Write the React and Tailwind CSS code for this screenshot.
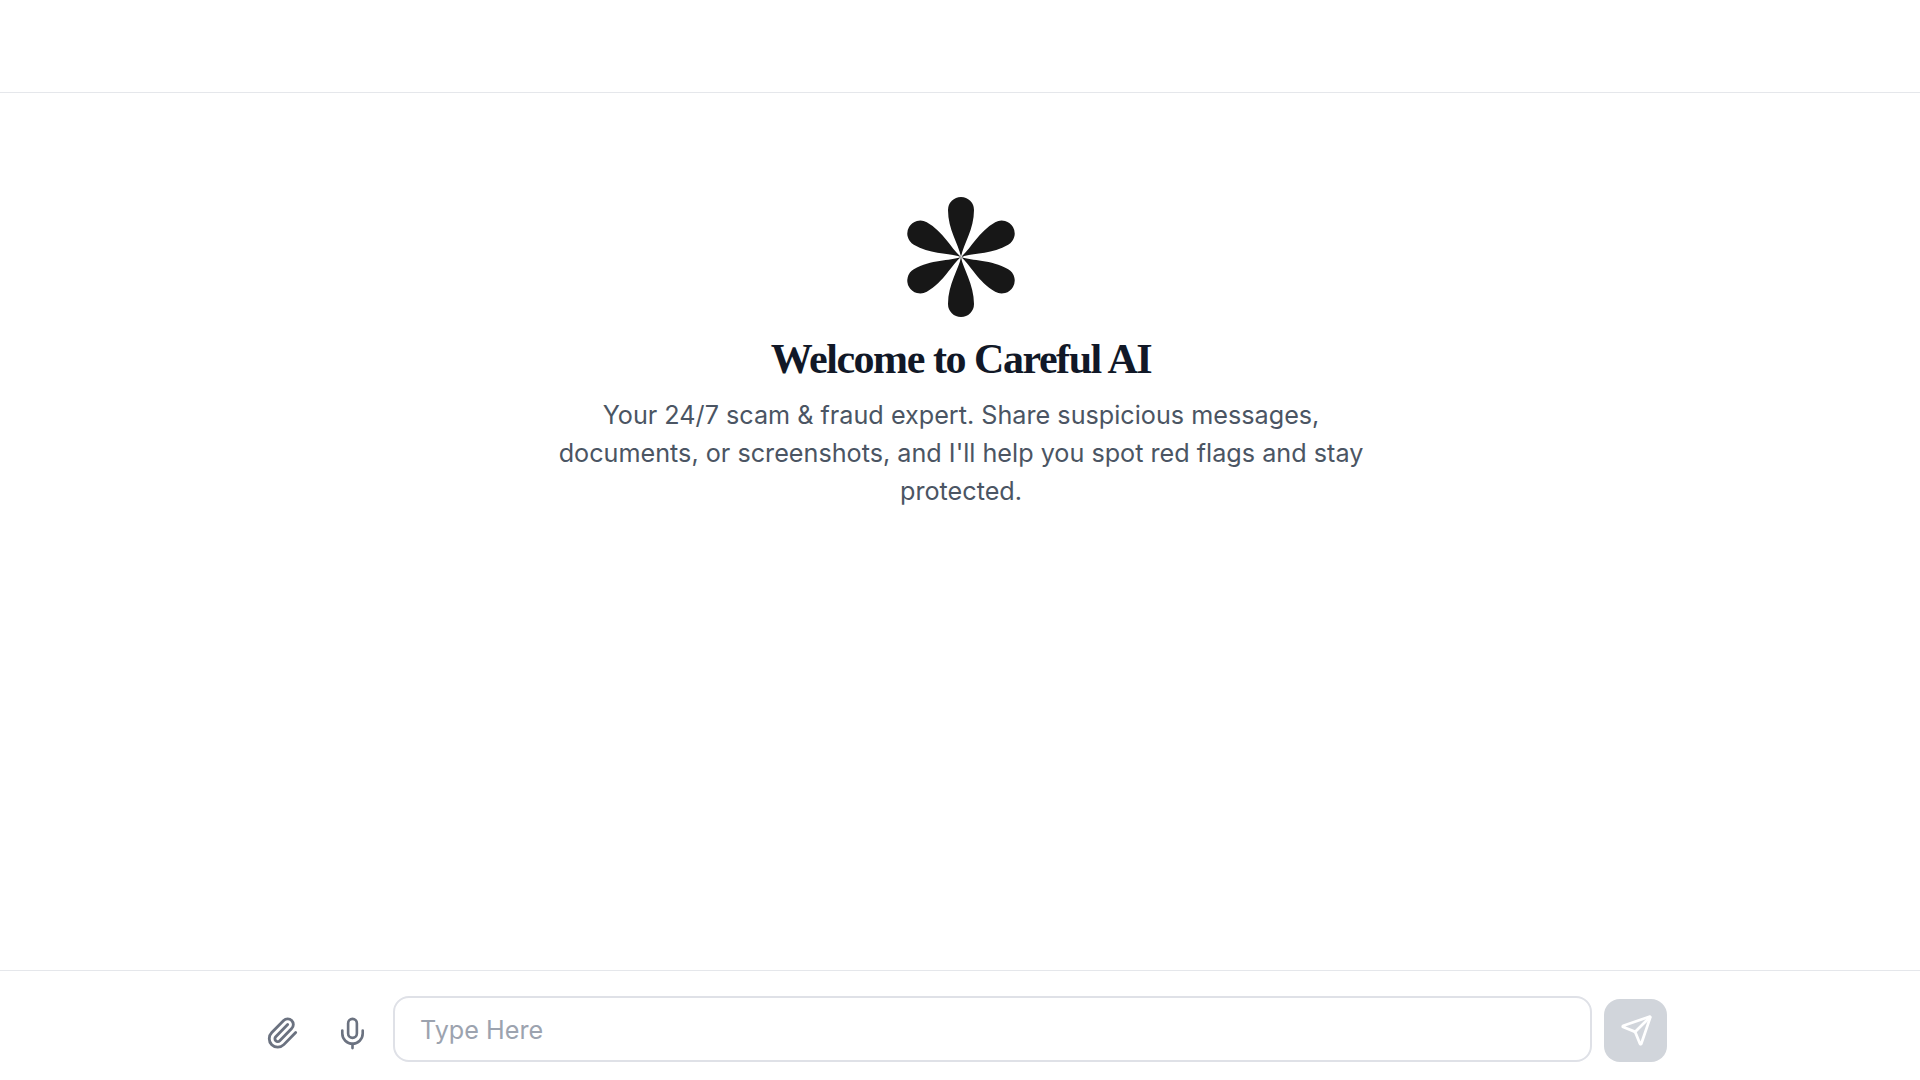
import React from 'react';
import { Send, Mic, Paperclip } from 'lucide-react';

function Logo() {
  const petal = 'M0 0 C-2 -12 -13 -27 -13 -47 A13 13 0 0 1 13 -47 C13 -27 2 -12 0 0 Z';
  return (
    <svg width="120" height="124" viewBox="-60 -62 120 124" className="block">
      {[0, 60, 120, 180, 240, 300].map((deg) => (
        <path key={deg} d={petal} fill="#171717" transform={`rotate(${deg})`} />
      ))}
    </svg>
  );
}

export default function App() {
  return (
    <div className="h-screen bg-white flex flex-col font-['Inter',sans-serif]">
      <header className="h-[93px] shrink-0 border-b border-[#e5e7eb]" />

      <main className="flex-1 flex flex-col items-center pt-[102px] pl-[2px]">
        <Logo />
        <h1 className="mt-[16px] font-['Liberation_Serif',serif] font-bold text-[42px] leading-[48px] tracking-[-1.45px] text-[#111827]">
          Welcome to Careful AI
        </h1>
        <p className="mt-[13px] w-[820px] text-center text-[25.2px] leading-[38px] text-[#4b5563]">
          Your 24/7 scam &amp; fraud expert. Share suspicious messages, documents, or screenshots, and I'll help you spot red flags and stay protected.
        </p>
      </main>

      <footer className="h-[110px] shrink-0 border-t border-[#e5e7eb] flex justify-center items-start pt-[25px] pr-[6px]">
        <div className="flex items-start">
          <button className="w-[70px] h-[66px] flex items-center justify-center mt-[4px]"><Paperclip size={34} color="#6b7280" strokeWidth={2} /></button>
          <button className="w-[70px] h-[66px] flex items-center justify-center mt-[4px]"><Mic size={35} color="#6b7280" strokeWidth={1.8} /></button>
          <div className="w-[1199px] h-[66px] ml-[6px] border-2 border-[#dfe1e7] rounded-2xl flex items-center px-[25px] pt-[3px] text-[25.2px] text-[#9ca3af]">Type Here</div>
          <button className="ml-[12px] w-[63px] h-[63px] mt-[3px] rounded-2xl bg-[#d1d5db] flex items-center justify-center pl-[1px]"><Send size={33} color="#fff" strokeWidth={2} /></button>
        </div>
      </footer>
    </div>
  );
}
